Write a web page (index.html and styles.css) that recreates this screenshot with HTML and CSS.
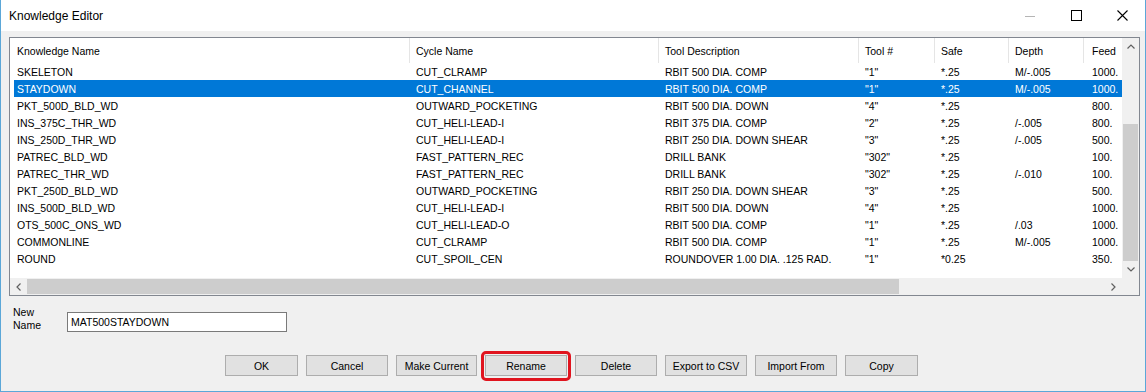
FILE: index.html
```html
<!DOCTYPE html>
<html>
<head>
  <meta charset="UTF-8">
  <title>Knowledge Editor</title>
  <link rel="stylesheet" href="styles.css">
</head>
<body>
  <div class="window">
    <div class="titlebar">
      <div class="title">Knowledge Editor</div>
      <div class="caption-btn">
        <svg width="10" height="10" viewBox="0 0 10 10"><line x1="0" y1="5.5" x2="10" y2="5.5" stroke="#b5b5b5" stroke-width="1"/></svg>
      </div>
      <div class="caption-btn">
        <svg width="11" height="11" viewBox="0 0 11 11"><rect x="0.5" y="0.5" width="10" height="10" fill="none" stroke="#000" stroke-width="1"/></svg>
      </div>
      <div class="caption-btn">
        <svg width="11" height="11" viewBox="0 0 11 11"><path d="M0.5 0.5 L10.5 10.5 M10.5 0.5 L0.5 10.5" stroke="#000" stroke-width="1.1"/></svg>
      </div>
    </div>

    <div class="client">
      <div class="list">
        <div class="view">
          <div class="header">
            <div class="cell c1">Knowledge Name</div>
            <div class="cell c2">Cycle Name</div>
            <div class="cell c3">Tool Description</div>
            <div class="cell c4">Tool #</div>
            <div class="cell c5">Safe</div>
            <div class="cell c6">Depth</div>
            <div class="cell c7">Feed</div>
          </div>
          <div class="row"><div class="cell c1">SKELETON</div><div class="cell c2">CUT_CLRAMP</div><div class="cell c3">RBIT 500 DIA. COMP</div><div class="cell c4">"1"</div><div class="cell c5">*.25</div><div class="cell c6">M/-.005</div><div class="cell c7">1000.</div></div>
          <div class="row selected"><div class="cell c1">STAYDOWN</div><div class="cell c2">CUT_CHANNEL</div><div class="cell c3">RBIT 500 DIA. COMP</div><div class="cell c4">"1"</div><div class="cell c5">*.25</div><div class="cell c6">M/-.005</div><div class="cell c7">1000.</div></div>
          <div class="row"><div class="cell c1">PKT_500D_BLD_WD</div><div class="cell c2">OUTWARD_POCKETING</div><div class="cell c3">RBIT 500 DIA. DOWN</div><div class="cell c4">"4"</div><div class="cell c5">*.25</div><div class="cell c6"></div><div class="cell c7">800.</div></div>
          <div class="row"><div class="cell c1">INS_375C_THR_WD</div><div class="cell c2">CUT_HELI-LEAD-I</div><div class="cell c3">RBIT 375 DIA. COMP</div><div class="cell c4">"2"</div><div class="cell c5">*.25</div><div class="cell c6">/-.005</div><div class="cell c7">800.</div></div>
          <div class="row"><div class="cell c1">INS_250D_THR_WD</div><div class="cell c2">CUT_HELI-LEAD-I</div><div class="cell c3">RBIT 250 DIA. DOWN SHEAR</div><div class="cell c4">"3"</div><div class="cell c5">*.25</div><div class="cell c6">/-.005</div><div class="cell c7">500.</div></div>
          <div class="row"><div class="cell c1">PATREC_BLD_WD</div><div class="cell c2">FAST_PATTERN_REC</div><div class="cell c3">DRILL BANK</div><div class="cell c4">"302"</div><div class="cell c5">*.25</div><div class="cell c6"></div><div class="cell c7">100.</div></div>
          <div class="row"><div class="cell c1">PATREC_THR_WD</div><div class="cell c2">FAST_PATTERN_REC</div><div class="cell c3">DRILL BANK</div><div class="cell c4">"302"</div><div class="cell c5">*.25</div><div class="cell c6">/-.010</div><div class="cell c7">100.</div></div>
          <div class="row"><div class="cell c1">PKT_250D_BLD_WD</div><div class="cell c2">OUTWARD_POCKETING</div><div class="cell c3">RBIT 250 DIA. DOWN SHEAR</div><div class="cell c4">"3"</div><div class="cell c5">*.25</div><div class="cell c6"></div><div class="cell c7">500.</div></div>
          <div class="row"><div class="cell c1">INS_500D_BLD_WD</div><div class="cell c2">CUT_HELI-LEAD-I</div><div class="cell c3">RBIT 500 DIA. DOWN</div><div class="cell c4">"4"</div><div class="cell c5">*.25</div><div class="cell c6"></div><div class="cell c7">1000.</div></div>
          <div class="row"><div class="cell c1">OTS_500C_ONS_WD</div><div class="cell c2">CUT_HELI-LEAD-O</div><div class="cell c3">RBIT 500 DIA. COMP</div><div class="cell c4">"1"</div><div class="cell c5">*.25</div><div class="cell c6">/.03</div><div class="cell c7">1000.</div></div>
          <div class="row"><div class="cell c1">COMMONLINE</div><div class="cell c2">CUT_CLRAMP</div><div class="cell c3">RBIT 500 DIA. COMP</div><div class="cell c4">"1"</div><div class="cell c5">*.25</div><div class="cell c6">M/-.005</div><div class="cell c7">1000.</div></div>
          <div class="row"><div class="cell c1">ROUND</div><div class="cell c2">CUT_SPOIL_CEN</div><div class="cell c3">ROUNDOVER 1.00 DIA. .125 RAD.</div><div class="cell c4">"1"</div><div class="cell c5">*0.25</div><div class="cell c6"></div><div class="cell c7">350.</div></div>
        </div>

        <div class="vscroll">
          <div class="arrow-btn">
            <svg width="8" height="5" viewBox="0 0 8 5"><polyline points="0.5,4.5 4,1 7.5,4.5" fill="none" stroke="#606060" stroke-width="1.2"/></svg>
          </div>
          <div class="vtrack"><div class="vthumb"></div></div>
          <div class="arrow-btn">
            <svg width="8" height="5" viewBox="0 0 8 5"><polyline points="0.5,0.5 4,4 7.5,0.5" fill="none" stroke="#606060" stroke-width="1.2"/></svg>
          </div>
        </div>

        <div class="hscroll">
          <div class="arrow-btn h">
            <svg width="5" height="8" viewBox="0 0 5 8"><polyline points="4.5,0.5 1,4 4.5,7.5" fill="none" stroke="#606060" stroke-width="1.2"/></svg>
          </div>
          <div class="htrack"><div class="hthumb"></div></div>
          <div class="arrow-btn h">
            <svg width="5" height="8" viewBox="0 0 5 8"><polyline points="0.5,0.5 4,4 0.5,7.5" fill="none" stroke="#606060" stroke-width="1.2"/></svg>
          </div>
        </div>
        <div class="corner"></div>
      </div>

      <div class="name-row">
        <label class="name-label" for="newname">New<br>Name</label>
        <input id="newname" class="name-input" type="text" value="MAT500STAYDOWN">
      </div>

      <div class="buttons">
        <button class="btn narrow">OK</button>
        <button class="btn">Cancel</button>
        <button class="btn mid">Make Current</button>
        <button class="btn highlight">Rename</button>
        <button class="btn">Delete</button>
        <button class="btn">Export to CSV</button>
        <button class="btn">Import From</button>
        <button class="btn narrow">Copy</button>
      </div>
    </div>
  </div>
</body>
</html>
```

FILE: styles.css
```css
body {
  margin: 0;
  font-family: "Liberation Sans", Arial, sans-serif;
  font-size: 10.5px;
  color: #000;
}

.window {
  width: 1146px;
  height: 392px;
  box-sizing: border-box;
  border: 1px solid #5ba7d8;
  border-top: none;
  background-color: #f0f0f0;
}

.titlebar {
  height: 31px;
  background-color: #fff;
  display: flex;
  align-items: center;
}
.title {
  flex: 1;
  padding-left: 8px;
  font-size: 12px;
}
.caption-btn {
  width: 46px;
  height: 31px;
  display: flex;
  align-items: center;
  justify-content: center;
}

.client {
  padding: 6px 5px 0 8px;
}

/* list view */
.list {
  width: 1131px;
  height: 259px;
  box-sizing: border-box;
  border: 1px solid #828790;
  background-color: #fff;
  display: grid;
  grid-template-columns: 1fr 17px;
  grid-template-rows: 1fr 17px;
}
.view {
  overflow: hidden;
}
.header {
  display: flex;
  height: 25px;
}
.header .cell {
  line-height: 26px;
  border-right: 1px solid #e5e5e5;
}
.header .c7 {
  border-right: none;
}
.row {
  display: flex;
  height: 17px;
  line-height: 18px;
  margin-left: 4px;
}
.row.selected {
  background-color: #0078d7;
  color: #fff;
}
.cell {
  flex: none;
  box-sizing: border-box;
  padding-left: 6px;
  overflow: hidden;
  white-space: nowrap;
}
.c1 { width: 400px; padding-left: 7px; }
.row .c1 { width: 396px; padding-left: 3px; }
.c2 { width: 249px; }
.c3 { width: 200px; }
.c4 { width: 76px; }
.c5 { width: 74px; }
.c6 { width: 75px; }
.c7 { width: 60px; padding-left: 8px; }

/* scrollbars */
.vscroll {
  background-color: #f0f0f0;
  display: flex;
  flex-direction: column;
}
.arrow-btn {
  flex: none;
  height: 17px;
  display: flex;
  align-items: center;
  justify-content: center;
}
.arrow-btn.h {
  width: 17px;
  height: auto;
}
.vtrack {
  flex: 1;
  display: flex;
  flex-direction: column;
  justify-content: flex-end;
}
.vthumb {
  height: 137px;
  margin: 0 1px;
  background-color: #cdcdcd;
}
.hscroll {
  background-color: #f0f0f0;
  display: flex;
}
.htrack {
  flex: 1;
  display: flex;
}
.hthumb {
  width: 872px;
  margin: 1px 0;
  background-color: #cdcdcd;
}
.corner {
  background-color: #f0f0f0;
}

/* new name */
.name-row {
  display: flex;
  align-items: flex-start;
  margin-top: 16px;
}
.name-label {
  width: 54px;
  padding-left: 4px;
  margin-top: -6px;
  line-height: 13px;
}
.name-input {
  width: 220px;
  height: 20px;
  box-sizing: border-box;
  border: 1px solid #7a7a7a;
  padding: 0 3px;
  margin: 0;
  font-family: inherit;
  font-size: 10.5px;
  color: #000;
  background-color: #fff;
}

/* buttons */
.buttons {
  display: flex;
  gap: 8px;
  margin-top: 23px;
  padding-left: 216px;
}
.btn {
  position: relative;
  width: 82px;
  height: 21px;
  padding: 0;
  margin: 0;
  border: 1px solid #adadad;
  background-color: #e1e1e1;
  font-family: inherit;
  font-size: 10.5px;
  color: #000;
}
.btn.narrow {
  width: 73px;
}
.btn.mid {
  width: 81px;
}
.btn.highlight::after {
  content: "";
  position: absolute;
  left: -5px;
  right: -5px;
  top: -5px;
  bottom: -6px;
  border: 3px solid #e0141e;
  border-radius: 5px;
}
```
